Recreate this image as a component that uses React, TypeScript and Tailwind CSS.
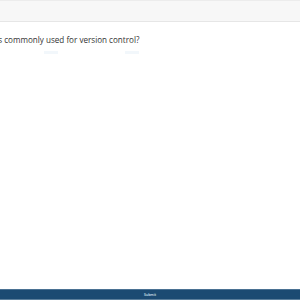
import React from "react";

export default function App() {
  return (
    <div
      className="w-[300px] h-[300px] bg-white flex flex-col overflow-hidden"
      style={{ fontFamily: '"Open Sans", "Noto Sans", sans-serif' }}
    >
      <div className="h-[22px] shrink-0 bg-[#f7f7f7] border-t border-t-[#ececec] border-b border-b-[#e6e6e6]" />
      <div className="flex-1 relative overflow-hidden">
        <div className="mt-[12px] ml-[-46px] whitespace-nowrap text-[8.1px] leading-[12px] text-[#333333]">
          Which tool is commonly used for version control?
        </div>
        <div className="flex mt-[5px]">
          <div className="ml-[44px] w-[14px] h-[3px] bg-[#f2f7fb]" />
          <div className="ml-[67px] w-[14px] h-[3px] bg-[#f2f7fb]" />
        </div>
      </div>
      <div className="h-[11px] shrink-0 bg-[#1b4a72] border-t border-t-[#4a7193] border-b border-b-[#5c7f9c] flex items-center justify-center">
        <span className="text-[3.5px] leading-[4px] font-semibold text-[#dbe6ef]">Submit</span>
      </div>
    </div>
  );
}
